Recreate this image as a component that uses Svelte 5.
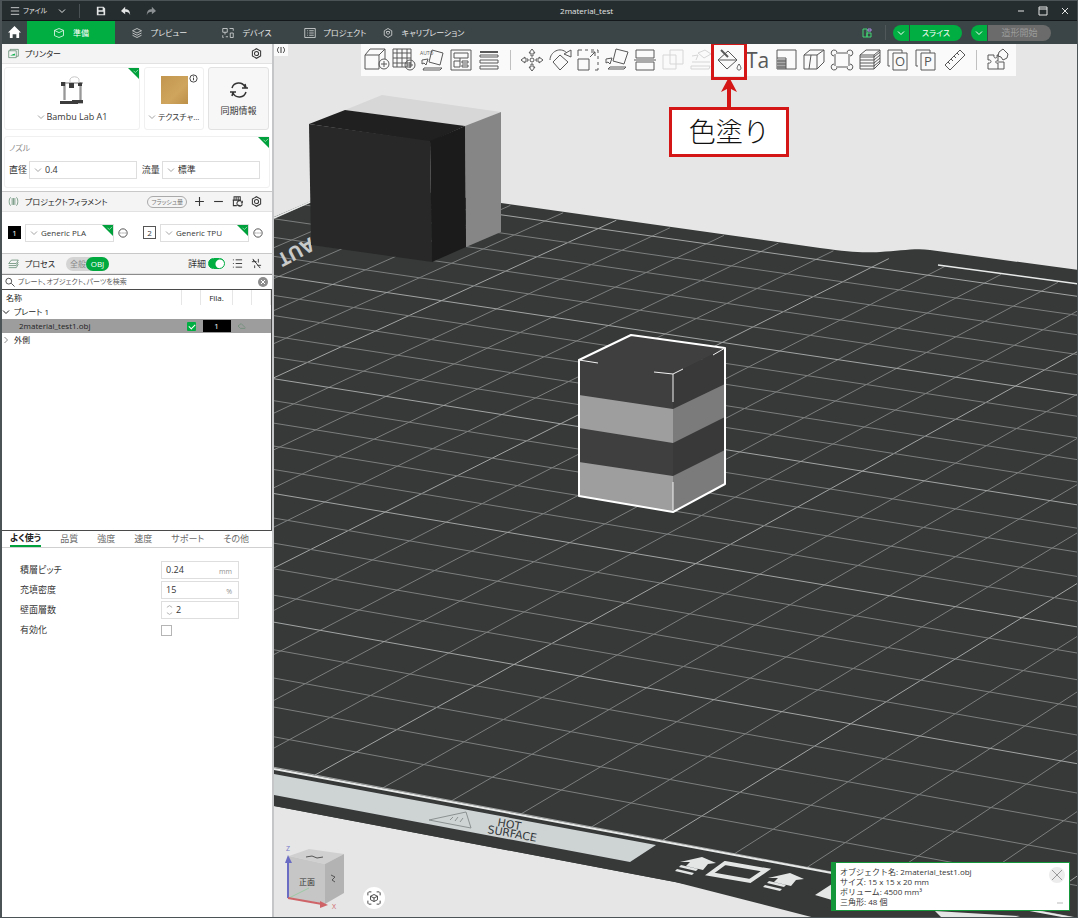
<script lang="ts">
	type Tool = {
		name: string;
		d: string;
		bold?: string;
		text?: { x: number; y: number; size: number; value: string };
		off?: boolean;
		callout?: string;
	};

	let tab = $state('準備');
	let settingsTab = $state('よく使う');
	let detail = $state(true);
	let query = $state('');

	const tabs = [
		{ label: '準備', d: 'M2 4.5 8 2l6 2.500v7L8 14l-6-2.500zM2 4.500 8 7.500l6-3' },
		{ label: 'プレビュー', d: 'M2 5l6-3 6 3-6 3zM2 8l6 3 6-3M2 11l6 3 6-3' },
		{ label: 'デバイス', d: 'M1 2h6v5H1zM4 7v3M2 14H1v-3M10 2h5v3M11 8h4v6h-4zM5 13h3' },
		{ label: 'プロジェクト', d: 'M1 2h14v12H1zM4 5h1M7 5h6M4 8h1M7 8h6M4 11h1M7 11h6' },
		{ label: 'キャリブレーション', d: 'M8 2l5 3v6l-5 3-5-3V5zM6 6h4v2L8 10 6 8z' }
	];

	const settingsTabs = ['よく使う', '品質', '強度', '速度', 'サポート', 'その他'];

	const tools: (Tool | null)[] = [
		{ name: '追加', d: 'M1 7H15V21H1ZM1 7 6 1H21V11M15 7l6-6M25 16a5 5 0 1 1-10 0a5 5 0 1 1 10 0M20 13v6M17 16h6' },
		{ name: 'プレート追加', d: 'M1 1H19V19H1ZM5 1V19M10 1V19M15 1V19M1 5H19M1 10H19M1 15H19M23 17a5 5 0 1 1-10 0a5 5 0 1 1 10 0M18 14v6M15 17h6' },
		{ name: '自動方向', d: 'M12 2 23 5 20 17 9 14ZM4 20H22L20 22H3ZM2 12l6-1-2 6-2-2-2 1z', text: { x: 0, y: 7, size: 5, value: 'AUTO' } },
		{ name: '自動配置', d: 'M2 2H22V22H2ZM5 5H19V10H5ZM5 13H11V19H5ZM13 13H19V15H13ZM13 17H19V19H13ZM11 10v3' },
		{ name: '可変レイヤー', d: 'M3 7H21V9H3ZM3 12H21V15H3ZM3 18H21V21H3Z', bold: 'M3 4H21' },
		null,
		{ name: '移動', d: 'M12 1l3 4h-2v3h-2V5H9zM12 23l3-4h-2v-3h-2v3H9zM1 12l4-3v2h3v2H5v2zM23 12l-4-3v2h-3v2h3v2zM14 12a2 2 0 1 1-4 0a2 2 0 1 1 4 0' },
		{ name: '回転', d: 'M12 7l8 7-8 8-7-8zM2 12C2 4 12-2 19 5M23 2v7l-7-3z' },
		{ name: '拡大縮小', d: 'M2 11H13V22H2ZM2 8V2H6M9 2h3M15 2h3M21 2h1v3M22 8v3M22 14v3M22 20v2h-3M14 9l5-5M15 4h4v4' },
		{ name: '底面選択', d: 'M11 1 23 4 19 16 8 13ZM5 19H21L19 21H3ZM1 11l6-1-2 6-2-2-2 1z' },
		{ name: 'カット', d: 'M3 2H21V10H3ZM3 14H21V22H3ZM1 12H23' },
		{ name: 'メッシュ演算', d: 'M2 7H15V21H2ZM9 2H22V16H9Z', off: true },
		{ name: '簡略化', d: 'M2 18H21L20 21H2ZM3 14h18M3 8l6-1-2 5M9 5l7-3 6 4-7 4z', off: true },
		{ name: '色塗り', d: 'M1 12 11 3 20 12 10 21ZM1 12H20M22 16c3 4 2 6 0 6s-3-2 0-6', bold: 'M4 2l7 7', callout: '色塗り' },
		{ name: 'テキスト', d: '', text: { x: 1, y: 20, size: 21, value: 'Ta' } },
		{ name: 'サポートペイント', d: 'M3 2H22V21H12V10H3ZM3 10V21H12M5 11V21M7 11V21M9 11V21M11 11V21M3 13h9M3 16h9M3 19h9' },
		{ name: '継ぎ目ペイント', d: 'M2 7H15V21H2ZM2 7 8 2H22V14L15 21M15 7l7-5M9 7 7 21' },
		{ name: 'ブリム', d: 'M6 5H18M19 6V18M18 19H6M5 18V6M7 4a3 3 0 1 0-3 4M17 4a3 3 0 1 1 3 4M4 16a3 3 0 1 0 3 4M20 16a3 3 0 1 1-3 4' },
		{ name: 'レイヤー', d: 'M2 7H16V21H2ZM2 7 8 2H22V15L16 21M16 7l6-5M2 9H16L22 4M2 12H16L22 7M2 15H16L22 10M2 18H16L22 13' },
		{ name: 'オブジェクト', d: 'M7 5H21V22H7ZM4 18H2V2H16V5', text: { x: 9, y: 18, size: 13, value: 'O' } },
		{ name: 'パーツ', d: 'M7 5H21V22H7ZM4 18H2V2H16V5', text: { x: 10, y: 18, size: 13, value: 'P' } },
		{ name: '計測', d: 'M2 17 17 2 22 7 7 22ZM5 14l2 2M8 11l2 2M11 8l2 2M14 5l2 2' },
		null,
		{ name: '組立', d: 'M2 7H8C7 11 12 11 11 7H12V13C9 12 9 16 12 15V21H2V15C6 16 6 11 2 12ZM12 14H18V21H12M13 4l4-3 2 2 3 3-1 4-4 2-2-3-3-1z' }
	];

	// Bed plane to screen: (column, row) in 10 mm cells
	function project(c: number, r: number) {
		const w = 1 - 0.00533 * c + 0.00955 * r;
		return [(315 + 66 * c + 44.72 * r) / w, (775 + 8.57 * c - 15.76 * r) / w];
	}

	function segment(c1: number, r1: number, c2: number, r2: number) {
		const [x1, y1] = project(c1, r1);
		const [x2, y2] = project(c2, r2);
		return { x1, y1, x2, y2 };
	}

	const grid: { x1: number; y1: number; x2: number; y2: number; bold: boolean }[] = [];
	for (let c = -15; c <= 10; c++) grid.push({ ...segment(c, 0, c, 25.6), bold: c % 5 === 0 });
	for (let r = 0; r <= 25; r++) grid.push({ ...segment(-15, r, 10.6, r), bold: r % 5 === 0 });
</script>

{#snippet chevron()}
	<svg class="chev" viewBox="0 0 8 8" aria-hidden="true"><path d="M1 2.500 4 5.500l3-3" /></svg>
{/snippet}

{#snippet gear()}
	<svg class="ico" viewBox="0 0 16 16" aria-hidden="true"><path class="heavy" d="M8 1l6 3.500v7L8 15l-6-3.500v-7zM11 8a3 3 0 1 1-6 0a3 3 0 1 1 6 0" /></svg>
{/snippet}

{#snippet corner()}
	<svg class="corner" viewBox="0 0 12 12" aria-hidden="true"><path d="M0 0h12v12z" /><path class="tick" d="M6 3l2 2 3-3" /></svg>
{/snippet}

<div class="app">
	<header class="titlebar">
		<button class="file" aria-label="メニュー">
			<svg class="ico" viewBox="0 0 12 12"><path d="M1 2h10M1 6h10M1 10h10" /></svg>
			ファイル
		</button>
		<button class="more" aria-label="その他">{@render chevron()}</button>
		<span class="sep"></span>
		<button class="act" aria-label="保存"><svg class="ico" viewBox="0 0 12 12"><path class="solid" d="M1 1h8l2 2v8H1zM3 2v3h5V2zM3 7v3h6V7z" fill-rule="evenodd" /></svg></button>
		<button class="act" aria-label="元に戻す"><svg class="ico" viewBox="0 0 12 12"><path class="solid" d="M5 1v3c4 0 6 2 6 7-1-3-3-4-6-4v3L0 6z" /></svg></button>
		<button class="act dim" aria-label="やり直し"><svg class="ico" viewBox="0 0 12 12"><path class="solid" d="M7 1v3C3 4 1 6 1 11c1-3 3-4 6-4v3l5-4z" /></svg></button>
		<span class="title">2material_test</span>
		<button aria-label="最小化"><svg class="ico" viewBox="0 0 10 10"><path d="M2 5h6" /></svg></button>
		<button aria-label="最大化"><svg class="ico" viewBox="0 0 10 10"><path d="M1 1h8v8H1zM1 3h8" /></svg></button>
		<button aria-label="閉じる"><svg class="ico" viewBox="0 0 10 10"><path d="M2 2l6 6M8 2l-6 6" /></svg></button>
	</header>

	<nav class="nav">
		<button class="home" aria-label="ホーム"><svg viewBox="0 0 14 14"><path d="M7 0 0 7h2v6h3V9h4v4h3V7h2z" /></svg></button>
		{#each tabs as t}
			<button class="tab" class:active={tab === t.label} onclick={() => (tab = t.label)}>
				<svg class="ico" viewBox="0 0 16 16"><path d={t.d} /></svg>
				{t.label}
			</button>
		{/each}
		<span class="fill"></span>
		<button class="layout" aria-label="レイアウト"><svg viewBox="0 0 10 10"><path d="M1 1h4v8H1zM5 5h4v4H5z" /><path class="violet" d="M6 1h3v2H6z" /></svg></button>
		<span class="sep"></span>
		<div class="pill">
			<button class="drop" aria-label="スライス設定">{@render chevron()}</button><button class="main">スライス</button>
		</div>
		<div class="pill print">
			<button class="drop" aria-label="造形設定">{@render chevron()}</button><button class="main" disabled>造形開始</button>
		</div>
	</nav>

	<div class="body">
		<aside class="side">
			<div class="bar">
				<svg class="ico green" viewBox="0 0 16 16"><path d="M1 4h11v10H1zM3 4V2h12v10h-3" /><path class="accent" d="M3 11h7V8z" /></svg>
				<h2>プリンター</h2>
				<button aria-label="プリンター設定">{@render gear()}</button>
			</div>

			<div class="cards">
				<div class="card printer">
					<svg class="machine" viewBox="0 0 24 30" aria-hidden="true">
						<path class="light" d="M10 7V4a5 4 0 0 1 9 0v3" />
						<path class="frame" d="M4 7v18M20 7v18M5 7v18M21 7v18M1 8h22M3 28h20" />
						<path class="dark" d="M0 26h18v3H0zM9 8h5v5H9zM1 7h4v4H1zM18 8h4v3h-4zM12 25h11v3H12z" />
					</svg>
					<label class="pick">{@render chevron()}<select aria-label="プリンター"><option>Bambu Lab A1</option></select></label>
					{@render corner()}
				</div>
				<div class="card plate">
					<div class="swatch"></div>
					<button class="info" aria-label="プレート情報"><svg class="ico" viewBox="0 0 10 10"><path d="M9 5a4 4 0 1 1-8 0a4 4 0 1 1 8 0M5 2v1M5 4v3" /></svg></button>
					<label class="pick">{@render chevron()}<select class="kana" aria-label="プレート"><option>テクスチャ...</option></select></label>
				</div>
				<button class="card sync">
					<svg viewBox="0 0 20 20" aria-hidden="true"><path d="M3 8a7 7 0 0 1 13-1M17 12a7 7 0 0 1-13 1M13 8h6M1 12h6M16 4l1 4M3 16l1-4" /></svg>
					同期情報
				</button>
			</div>

			<div class="card nozzle">
				<h3>ノズル</h3>
				<div class="fields">
					<label for="dia">直径</label>
					<span class="box wide">{@render chevron()}<select id="dia"><option>0.4</option></select></span>
					<label for="flow">流量</label>
					<span class="box">{@render chevron()}<select id="flow"><option>標準</option></select></span>
				</div>
				{@render corner()}
			</div>

			<div class="bar lined">
				<svg class="ico green" viewBox="0 0 16 16"><path d="M4 2C1 3 1 13 4 14M6 3v10M8 3v10M10 3v10M12 2c3 1 3 11 0 12" /></svg>
				<h2>プロジェクトフィラメント</h2>
				<button class="flush">フラッシュ量</button>
				<button aria-label="追加"><svg class="ico" viewBox="0 0 10 10"><path d="M1 5h8M5 1v8" /></svg></button>
				<button aria-label="削除"><svg class="ico" viewBox="0 0 10 10"><path d="M1 5h8" /></svg></button>
				<button aria-label="同期"><svg class="ico" viewBox="0 0 16 16"><path class="heavy" d="M3 6V1h9v5M1 6h12M2 6v8h5M6 1v5M9 1v5M14 8a4 4 0 1 0 1 4M9 13a4 4 0 0 0 4 1M13 10h2V7" /></svg></button>
				<button aria-label="フィラメント設定">{@render gear()}</button>
			</div>

			<div class="filaments">
				{#each ['Generic PLA', 'Generic TPU'] as name, i}
					<div class="filament">
						<span class="slot" class:black={i === 0}>{i + 1}</span>
						<span class="box">
							{@render chevron()}<select aria-label={`フィラメント ${i + 1}`}><option>{name}</option></select>
							{@render corner()}
						</span>
						<button aria-label="編集"><svg class="ico" viewBox="0 0 12 12"><path d="M11 6A5 5 0 1 1 1 6a5 5 0 1 1 10 0M3 6h1M5.500 6h1M8 6h1" /></svg></button>
					</div>
				{/each}
			</div>

			<div class="bar lined">
				<svg class="ico green" viewBox="0 0 16 16"><path d="M1 8l4-5h10l-3 5zM1 11h11l3-5M1 14h11l3-5" /></svg>
				<h2 class="short">プロセス</h2>
				<div class="scope"><button>全般</button><button class="on">OBJ</button></div>
				<span class="fill"></span>
				<label class="detail">詳細<input type="checkbox" role="switch" bind:checked={detail} /></label>
				<button aria-label="リスト"><svg class="ico" viewBox="0 0 12 12"><path d="M1 2h1M4 2h7M1 6h1M4 6h7M1 10h1M4 10h7" /></svg></button>
				<button aria-label="比較"><svg class="ico" viewBox="0 0 12 12"><path d="M2 1l8 10M1 4h5M8 1v4M4 8v3M7 8h4M2 2l3 3" /></svg></button>
			</div>

			<div class="search">
				<svg class="ico" viewBox="0 0 12 12"><path d="M8 5a3.500 3.500 0 1 1-7 0a3.500 3.500 0 1 1 7 0M7.500 7.500l4 4" /></svg>
				<input type="text" aria-label="検索" placeholder="プレート、オブジェクト、パーツを検索" bind:value={query} />
				<button aria-label="消去" onclick={() => (query = '')}><svg viewBox="0 0 10 10"><circle cx="5" cy="5" r="5" /><path d="M3 3l4 4M7 3l-4 4" /></svg></button>
			</div>

			<div class="tree">
				<table>
					<colgroup><col /><col class="c19" /><col class="c32" /><col class="c19" /><col class="c19" /></colgroup>
					<thead>
						<tr><th>名称</th><th></th><th class="mid">Fila.</th><th></th><th></th></tr>
					</thead>
					<tbody>
						<tr><td colspan="5"><span class="node open">{@render chevron()}プレート 1</span></td></tr>
						<tr class="selected">
							<td class="leaf">2material_test1.obj</td>
							<td><input class="visible" type="checkbox" checked aria-label="表示" /></td>
							<td><span class="fila">1</span></td>
							<td><svg class="paint" viewBox="0 0 12 10"><path d="M1 5l4-3 5 5M1 5l3 3h6" /></svg></td>
							<td></td>
						</tr>
						<tr><td colspan="5"><span class="node">{@render chevron()}外側</span></td></tr>
					</tbody>
				</table>
			</div>

			<div class="subtabs">
				{#each settingsTabs as s}
					<button class:active={settingsTab === s} onclick={() => (settingsTab = s)}>{s}</button>
				{/each}
			</div>

			<div class="settings">
				<label for="layer">積層ピッチ</label>
				<span class="box"><input id="layer" type="text" value="0.24" /><em>mm</em></span>
				<label for="infill">充填密度</label>
				<span class="box"><input id="infill" type="text" value="15" /><em>%</em></span>
				<label for="walls">壁面層数</label>
				<span class="box"><svg class="spin" viewBox="0 0 8 14"><path d="M1 4l3-2 3 2M1 10l3 2 3-2" /></svg><input id="walls" type="text" value="2" /></span>
				<label for="enable">有効化</label>
				<input id="enable" class="check" type="checkbox" />
			</div>
		</aside>

		<main class="view">
			<svg class="scene" viewBox="274 44 803 873" preserveAspectRatio="xMinYMin slice" role="img" aria-label="ビルドプレート">
				<path class="bed" d="M274 217 355 182 501 203 820 248C850 252 860 253 880 252S915 248 930 250L1078 270V918H862L675 882 274 806Z" />
				<g class="grid">
					{#each grid as l}
						<line class:bold={l.bold} x1={l.x1} y1={l.y1} x2={l.x2} y2={l.y2} />
					{/each}
				</g>
				<path class="edge thin" d="M274 218 355 182M938 265 1078 284" />
				<path class="bed" d="M274 771 1078 921V930H862L675 882 274 806Z" />
				<path class="edge" d="M274 769 1078 919" />
				<path class="strip" d="M274 774 656 845 630 862 274 795Z" />
				<g class="marks">
					<path class="warn" d="M429 820 466 812 471 828ZM450 820l3-3M455 821l3-4M460 822l3-4" />
					<text transform="translate(497 826) rotate(10)" font-size="11">HOT</text>
					<text transform="translate(487 833) rotate(10)" font-size="11">SURFACE</text>
				</g>
				<path class="white" d="M680 862l22-5 14 6-8 1-5 6-17-4 4-4zM681 865l17 4-2 2-17-4zM677 869l17 4-2 2-17-4z" />
				<path class="ring" d="M725 863 766 870 750 881 710 874Z" />
				<path class="white" d="M768 878l22-5 14 6-8 1-5 6-17-4 4-4zM769 881l17 4-2 2-17-4zM765 885l17 4-2 2-17-4z" />
				<path class="white" d="M815 895 832 884V900ZM935 911 1020 916 1012 918H942Z" />
				<text class="plate-text" transform="translate(310 237) rotate(152)" font-size="19">AUT</text>

				<path fill="#d7d7d7" d="M345 110 382 95 501 112 465 127Z" />
				<path fill="#868686" d="M465 126 501 112V232L466 247Z" />
				<path fill="#202020" d="M309 124 345 110 465 126 430 142Z" />
				<path fill="#282828" d="M309 124 430 141 432 262 311 245Z" />
				<path fill="#1b1b1b" d="M430 141 465 126 466 247 432 262Z" />

				<path fill="#3f3f3f" d="M579 360 631 335 725 348 673 374V512L579 496Z" />
				<path fill="#393939" d="M673 374 725 348V484L673 512Z" />
				<path fill="#9e9e9e" d="M579 395 673 409V443L579 428ZM579 462 673 476V512L579 496Z" />
				<path fill="#7b7b7b" d="M673 409 725 384V417L673 443ZM673 476 725 450V484L673 512Z" />
				<path class="outline" d="M579 360 631 335 725 348V484L673 512 579 496Z" />
				<path class="bounds" d="M579 360l19 3M654 372l19 2 10-5M673 374V402M673 482V510M713 355l12-7" />

				<g class="cube">
					<path fill="#d0d0d0" d="M289 856 309 849 344 854 325 864Z" />
					<path fill="#c6c6c6" d="M289 856 325 864V904L289 898Z" />
					<path fill="#b3b3b3" d="M325 864 344 854V893L325 904Z" />
					<text x="299" y="885" font-size="8">正面</text>
					<path class="mark" d="M306 857l6-1 5 2 6-1M331 875l4 2-3 3 3 2" />
					<path stroke="#9cc9a4" d="M289 898l20-10" />
					<path stroke="#6a6cc4" stroke-width="2" d="M288 898V862" />
					<path fill="#6a6cc4" d="M285 863l3-8 4 8z" />
					<path stroke="#cf6468" stroke-width="2" d="M288 898l34 6" />
					<path fill="#cf6468" d="M320 901l8 4-8 3z" />
					<text x="286" y="851" font-size="7" class="z">Z</text>
					<text x="332" y="909" font-size="7" class="x">X</text>
				</g>
			</svg>

			<div class="overlay">
				<button class="collapse" aria-label="サイドバーを隠す"><svg class="ico" viewBox="0 0 10 8"><path d="M3 1C1 3 1 5 3 7M5 1v6M7 1c2 2 2 4 0 6" /></svg></button>
				<div class="tools">
					{#each tools as t}
						{#if t}
							<button class="tool" class:off={t.off} aria-label={t.name} disabled={t.off}>
								<svg viewBox="0 0 24 24">
									<path d={t.d} />
									{#if t.bold}<path class="bold" d={t.bold} />{/if}
									{#if t.text}<text x={t.text.x} y={t.text.y} font-size={t.text.size}>{t.text.value}</text>{/if}
								</svg>
								{#if t.callout}
									<span class="callout">
										<svg viewBox="0 0 20 30"><path d="M10 0 18 15 12 12V30H8V12L2 15Z" /></svg>
										<span class="note">{t.callout}</span>
									</span>
								{/if}
							</button>
						{:else}
							<span class="divider"></span>
						{/if}
					{/each}
				</div>
			</div>

			<button class="fit" aria-label="全体表示"><svg viewBox="0 0 16 16"><path d="M1 5V2l1-1h3M11 1h3l1 1v3M15 11v3l-1 1h-3M5 15H2l-1-1v-3M8 4l4 2v4l-4 2-4-2V6zM4 6l4 2 4-2M8 8v4" /></svg></button>

			<div class="toast">
				<p>オブジェクト名: 2material_test1.obj</p>
				<p>サイズ: 15 x 15 x 20 mm</p>
				<p>ボリューム: 4500 mm³</p>
				<p>三角形: 48 個</p>
				<button aria-label="閉じる"><svg viewBox="0 0 16 16"><circle cx="8" cy="8" r="8" /><path d="M3 3l10 10M13 3 3 13" /></svg></button>
				<span class="dash"></span>
			</div>
		</main>
	</div>
</div>

<style>
	:global(body) {
		margin: 0;
	}
	.app {
		min-height: 100vh;
		box-sizing: border-box;
		display: flex;
		flex-direction: column;
		border: solid #4b5356;
		border-width: 1px 1px 1px 2px;
		font-family: 'Open Sans', 'Noto Sans CJK JP', sans-serif;
		font-size: 9px;
		line-height: 12px;
		font-feature-settings: 'palt';
		color: #363636;
	}
	.app :global(*) {
		box-sizing: border-box;
	}
	button,
	input,
	select {
		font: inherit;
		font-feature-settings: inherit;
		color: inherit;
		padding: 0;
		margin: 0;
		border: 0;
		background: none;
	}
	select,
	input {
		appearance: none;
		min-width: 0;
		outline: none;
	}
	button {
		display: flex;
		align-items: center;
		justify-content: center;
		white-space: nowrap;
		cursor: pointer;
	}
	svg {
		flex: none;
		fill: none;
		stroke: currentColor;
		stroke-width: 1;
	}
	h2,
	h3,
	p {
		margin: 0;
		font-size: inherit;
		font-weight: 400;
	}
	.ico {
		width: 10px;
		height: 10px;
	}
	.chev {
		width: 8px;
		height: 8px;
	}
	.solid {
		fill: currentColor;
		stroke: none;
	}
	.heavy {
		stroke-width: 1.5;
	}
	.fill {
		flex: 1;
	}
	.kana {
		font-size: 8px;
	}

	.titlebar {
		height: 20px;
		display: flex;
		align-items: center;
		background: #262d2f;
		border-bottom: 1px solid #14181a;
		color: #e4e6e6;
		font-size: 8px;
		padding-right: 1px;
	}
	.titlebar button {
		width: 22px;
		height: 18px;
	}
	.titlebar .act {
		width: 25px;
	}
	.titlebar .file {
		width: auto;
		gap: 3px;
		padding-left: 8px;
		font-size: 7px;
	}
	.titlebar .more {
		margin: 0 4px;
	}
	.titlebar .sep {
		width: 1px;
		height: 14px;
		background: #4a5154;
		margin: 0 8px 0 2px;
	}
	.titlebar .dim {
		color: #8b9092;
	}
	.titlebar .title {
		flex: 1;
		text-align: center;
	}

	.nav {
		height: 23px;
		display: flex;
		align-items: center;
		background: #3b4446;
		color: #e4e6e6;
	}
	.home {
		width: 25px;
	}
	.home svg {
		width: 13px;
		height: 13px;
		fill: #fff;
		stroke: none;
	}
	.tab {
		width: 88px;
		height: 100%;
		gap: 8px;
		font-size: 8px;
	}
	.tab .ico {
		width: 12px;
		height: 12px;
	}
	.tab.active {
		background: #00ae42;
		color: #fff;
	}
	.layout svg {
		width: 10px;
		height: 12px;
		stroke: #43d675;
	}
	.layout .violet {
		stroke: #a98be0;
	}
	.nav .sep {
		width: 1px;
		height: 15px;
		background: #50585a;
		margin: 0 7px 0 13px;
	}
	.pill {
		height: 16px;
		display: flex;
		gap: 1px;
		border-radius: 8px;
		overflow: hidden;
		color: #fff;
		font-size: 8px;
	}
	.pill .drop {
		width: 16px;
		background: #00ae42;
	}
	.pill .main {
		width: 52px;
		background: #00ae42;
	}
	.pill.print {
		margin: 0 26px 0 9px;
		font-size: 9px;
	}
	.pill.print .main {
		width: 63px;
		background: #6b6b6b;
		color: #9c9c9c;
	}

	.body {
		flex: 1;
		display: flex;
	}
	.side {
		width: 272px;
		flex: none;
		display: flex;
		flex-direction: column;
		background: #fff;
		border-right: 2px solid #c4c6c8;
	}
	.bar {
		height: 20px;
		display: flex;
		align-items: center;
		gap: 6px;
		padding: 0 9px 0 6px;
		background: #f4f4f4;
		border-bottom: 1px solid #e2e2e2;
	}
	.bar > button {
		padding: 0 1px;
	}
	.bar.lined {
		height: 21px;
		border-top: 1px solid #c8c8c8;
	}
	.bar h2 {
		flex: 1;
		font-size: 8px;
		color: #222;
	}
	.bar h2.short {
		flex: none;
	}
	.bar .ico {
		width: 11px;
		height: 11px;
	}
	.green {
		color: #4f7d60;
	}
	.green .accent {
		stroke: none;
		fill: #00ae42;
	}

	.card {
		position: relative;
		border: 1px solid #f0f0f0;
		border-radius: 3px;
	}
	.cards {
		display: flex;
		gap: 4px;
		padding: 3px 3px 0 2px;
	}
	.cards .card {
		height: 63px;
		display: flex;
		flex-direction: column;
		align-items: center;
		justify-content: flex-end;
		padding-bottom: 6px;
	}
	.printer {
		flex: 1;
	}
	.machine {
		width: 24px;
		height: 30px;
		margin-bottom: 6px;
	}
	.machine .light {
		stroke: #c9c9c9;
	}
	.machine .frame {
		stroke: #777;
	}
	.machine .dark {
		fill: #3c3c3c;
		stroke: none;
	}
	.plate {
		width: 60px;
	}
	.swatch {
		width: 27px;
		height: 28px;
		margin-bottom: 7px;
		background: linear-gradient(135deg, #c2964e, #cfa45c 60%, #bd9048);
	}
	.info {
		position: absolute;
		top: 6px;
		right: 5px;
	}
	.info .ico {
		width: 9px;
		height: 9px;
	}
	.pick {
		display: flex;
		align-items: center;
		gap: 2px;
	}
	.pick .chev,
	.box .chev {
		color: #a5a5a5;
	}
	.cards .sync {
		width: 61px;
		gap: 5px;
		padding-bottom: 12px;
		background: #f7f7f7;
		border-color: #e2e2e2;
	}
	.sync svg {
		width: 20px;
		height: 20px;
		stroke: #333;
		stroke-width: 1.5;
	}
	.corner {
		position: absolute;
		top: 0;
		right: 0;
		width: 11px;
		height: 11px;
		fill: #00a03c;
		stroke: none;
	}
	.corner .tick {
		fill: none;
		stroke: #8fdcaa;
	}
	.nozzle {
		height: 52px;
		margin: 6px 2px 3px 2px;
		padding: 5px 9px 0 4px;
	}
	.nozzle h3 {
		color: #8a8a8a;
		font-size: 8px;
	}
	.fields {
		display: flex;
		align-items: center;
		margin-top: 7px;
	}
	.fields .box {
		flex: 10;
		margin-left: 2px;
	}
	.fields .wide {
		flex: 11;
		margin-right: 5px;
	}
	.box {
		position: relative;
		height: 18px;
		display: flex;
		align-items: center;
		gap: 3px;
		padding-left: 4px;
		border: 1px solid #dedede;
	}
	.box select,
	.box input {
		flex: 1;
		width: 0;
	}
	.flush {
		height: 12px;
		border: 1px solid #aaa;
		border-radius: 6px;
		font-size: 6px;
		color: #777;
	}
	.bar .flush {
		padding: 0 3px;
	}

	.filaments {
		height: 41px;
		display: flex;
		align-items: center;
		gap: 15px;
		padding: 0 9px 0 6px;
	}
	.filament {
		flex: 1;
		display: flex;
		align-items: center;
		gap: 4px;
		font-size: 8px;
	}
	.filament .box {
		flex: 1;
	}
	.slot {
		width: 13px;
		height: 13px;
		line-height: 11px;
		text-align: center;
		border: 1px solid #555;
	}
	.slot.black {
		background: #000;
		color: #fff;
		border-color: #000;
	}

	.scope {
		display: flex;
		height: 14px;
		border-radius: 7px;
		background: #d4d4d4;
		color: #8a8a8a;
		margin-left: 5px;
		padding-left: 4px;
		font-size: 8px;
	}
	.scope .on {
		width: 23px;
		border-radius: 7px;
		background: #00a93e;
		color: #fff;
	}
	.detail {
		display: flex;
		align-items: center;
		gap: 2px;
	}
	.detail input {
		width: 17px;
		height: 11px;
		border-radius: 6px;
		border: 1px solid #999;
		background: radial-gradient(circle at 5px 5px, #fff 4px, #bbb 5px);
	}
	.detail input:checked {
		border-color: #00ae42;
		background: radial-gradient(circle at 11px 5px, #fff 4px, #00ae42 5px);
	}
	.search {
		height: 15px;
		display: flex;
		align-items: center;
		gap: 3px;
		padding: 0 4px 0 3px;
		border-top: 1px solid #8c8c8c;
		font-size: 7px;
	}
	.search input {
		flex: 1;
	}
	.search input::placeholder {
		color: #5b5b5b;
	}
	.search button svg {
		width: 10px;
		height: 10px;
		fill: #8c8c8c;
		stroke: #fff;
	}
	.search circle {
		stroke: none;
	}

	.tree {
		min-height: 242px;
		border: 1px solid #4a4a4a;
		border-left: 0;
		font-size: 8px;
	}
	.tree table {
		width: 100%;
		table-layout: fixed;
		border-collapse: collapse;
	}
	.tree tr {
		height: 14px;
	}
	.tree th,
	.tree td {
		padding: 0;
		text-align: left;
		font-weight: 400;
		color: #222;
		line-height: 12px;
	}
	.tree th {
		height: 15px;
		padding-left: 4px;
		border-right: 1px solid #e6e6e6;
	}
	.tree th.mid {
		padding: 0;
		text-align: center;
	}
	.c19 {
		width: 19px;
	}
	.c32 {
		width: 32px;
	}
	.node {
		display: flex;
		align-items: center;
		gap: 4px;
	}
	.node .chev {
		color: #888;
		transform: rotate(-90deg);
	}
	.node.open .chev {
		color: #222;
		transform: none;
	}
	.selected {
		background: #9d9d9d;
	}
	.tree .leaf {
		padding-left: 17px;
	}
	.visible {
		display: block;
		width: 9px;
		height: 9px;
		margin: 0 5px;
		padding: 2px;
		border-radius: 1px;
		background: #00ae42;
	}
	.visible::after {
		content: '';
		display: block;
		width: 5px;
		height: 3px;
		border: solid #fff;
		border-width: 0 0 1px 1px;
		transform: rotate(-45deg);
	}
	.fila {
		display: block;
		height: 12px;
		line-height: 12px;
		margin: 0 2px;
		background: #000;
		color: #fff;
		text-align: center;
	}
	.paint {
		display: block;
		width: 10px;
		height: 8px;
		margin-left: 4px;
		stroke: #6f8f78;
	}

	.subtabs {
		height: 17px;
		display: flex;
		gap: 19px;
		padding-left: 8px;
		border-bottom: 1px solid #d0d0d0;
		color: #6b6b6b;
	}
	.subtabs .active {
		color: #222;
		font-weight: 700;
		border-bottom: 2px solid #00a03c;
	}
	.settings {
		flex: 1;
		display: grid;
		grid-template-columns: 141px 78px;
		grid-auto-rows: 18px;
		gap: 2px 0;
		align-items: center;
		align-content: start;
		padding: 13px 0 0 18px;
	}
	.settings em {
		font-style: normal;
		font-size: 7px;
		color: #8f8f8f;
		padding: 3px 6px 0 0;
	}
	.settings .spin {
		width: 7px;
		height: 14px;
		stroke: #aaa;
	}
	.check {
		width: 11px;
		height: 11px;
		border: 1px solid #b5b5b5;
	}

	.view {
		position: relative;
		flex: 1;
		min-width: 0;
		overflow: hidden;
		background: #e6e6e6;
	}
	.scene {
		position: absolute;
		inset: 0;
		width: 100%;
		height: 100%;
		stroke: none;
	}
	.bed {
		fill: #373939;
	}
	.grid line {
		stroke: #7c7e7e;
		stroke-width: 1;
	}
	.grid .bold {
		stroke: #a2a4a4;
	}
	.edge {
		stroke: #e8eaea;
		stroke-width: 2;
	}
	.edge.thin {
		stroke-width: 1.5;
	}
	.strip {
		fill: #ced3d4;
	}
	.warn {
		stroke: #8b9091;
	}
	.marks text {
		fill: #33383a;
		font-family: 'DejaVu Sans', sans-serif;
	}
	.white {
		fill: #e4e6e6;
	}
	.ring {
		stroke: #e4e6e6;
		stroke-width: 4;
	}
	.plate-text {
		fill: #c9cbcb;
		font-weight: 700;
	}
	.outline {
		stroke: #fff;
		stroke-width: 2;
		stroke-linejoin: round;
	}
	.bounds {
		stroke: #f2f2f2;
	}
	.cube text {
		fill: #333;
	}
	.cube .mark {
		stroke: #555;
	}
	.cube .z {
		fill: #7779c8;
	}
	.cube .x {
		fill: #cf6468;
	}

	.overlay {
		position: relative;
		display: flex;
		align-items: flex-start;
	}
	.collapse {
		width: 14px;
		height: 12px;
		background: #fafafa;
	}
	.tools {
		width: 655px;
		height: 32px;
		display: flex;
		align-items: center;
		justify-content: space-between;
		margin: 0 61px 0 auto;
		padding: 0 4px 0 1px;
		background: #fafafa;
	}
	.tool {
		position: relative;
		width: 28px;
		height: 32px;
		color: #585858;
	}
	.tool > svg {
		width: 24px;
		height: 24px;
		overflow: visible;
	}
	.tool .bold {
		stroke-width: 2;
	}
	.tool text {
		fill: currentColor;
		stroke: none;
	}
	.tool.off {
		color: #d6d6d6;
	}
	.divider {
		width: 1px;
		height: 20px;
		margin: 0 7px;
		background: #c0c0c0;
	}
	.callout {
		position: absolute;
		inset: -2px -4px;
		z-index: 1;
		display: flex;
		flex-direction: column;
		align-items: center;
		padding-top: 32px;
		border: 3px solid #d41616;
	}
	.callout svg {
		width: 20px;
		height: 30px;
		fill: #d41616;
		stroke: none;
	}
	.note {
		flex: none;
		width: 120px;
		height: 50px;
		border: 3px solid #d41616;
		background: #fff;
		color: #111;
		font-family: 'Noto Sans CJK JP', sans-serif;
		font-weight: 300;
		font-size: 27px;
		line-height: 42px;
		font-feature-settings: normal;
		text-align: center;
	}
	.fit {
		position: absolute;
		left: 89px;
		bottom: 8px;
		width: 22px;
		height: 22px;
		border-radius: 50%;
		background: #fff;
	}
	.fit svg {
		width: 14px;
		height: 14px;
		stroke: #333;
	}
	.toast {
		position: absolute;
		right: 7px;
		bottom: 6px;
		width: 239px;
		padding: 4px 4px 3px;
		border: 1px solid #14963a;
		border-left-width: 5px;
		background: #fff;
		font-size: 8px;
		line-height: 10px;
		font-feature-settings: normal;
	}
	.toast button {
		position: absolute;
		top: 4px;
		right: 4px;
	}
	.toast button svg {
		width: 16px;
		height: 16px;
		fill: #ececec;
		stroke: #999;
	}
	.toast circle {
		stroke: none;
	}
	.toast .dash {
		position: absolute;
		right: 6px;
		bottom: 6px;
		width: 6px;
		height: 2px;
		background: #dcdcdc;
	}
</style>
